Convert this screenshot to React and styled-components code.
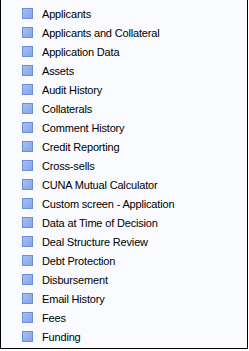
import styled, { createGlobalStyle } from "styled-components";

const GlobalStyle = createGlobalStyle`
  html, body {
    margin: 0;
    padding: 0;
    background: #ffffff;
  }
`;

const Panel = styled.div`
  width: 248px;
  height: 349px;
  box-sizing: border-box;
  border-left: 1px solid #000;
  border-right: 1px solid #000;
  border-bottom: 1px solid #000;
  background: #f9fbfe;
  overflow: hidden;
`;

const List = styled.ul`
  list-style: none;
  margin: 0;
  padding: 4px 0 0 21px;
`;

const Row = styled.li`
  display: flex;
  align-items: center;
  height: 19px;
  gap: 9px;
  font-family: Tahoma, "Liberation Sans", Arial, sans-serif;
  font-size: 11px;
  letter-spacing: -0.17px;
  color: #000;
  white-space: nowrap;
`;

const Icon = styled.span`
  width: 11px;
  height: 11px;
  flex: none;
  box-sizing: border-box;
  border: 1px solid #6a8edb;
  background: linear-gradient(135deg, #a9c1f2 0%, #93afeb 60%, #86a4e6 100%);
`;

const items = [
  "Applicants",
  "Applicants and Collateral",
  "Application Data",
  "Assets",
  "Audit History",
  "Collaterals",
  "Comment History",
  "Credit Reporting",
  "Cross-sells",
  "CUNA Mutual Calculator",
  "Custom screen - Application",
  "Data at Time of Decision",
  "Deal Structure Review",
  "Debt Protection",
  "Disbursement",
  "Email History",
  "Fees",
  "Funding",
];

const App = () => {
  return (
    <>
      <GlobalStyle />
      <Panel>
        <List>
          {items.map((item) => (
            <Row key={item}>
              <Icon />
              {item}
            </Row>
          ))}
        </List>
      </Panel>
    </>
  );
};

export default App;
